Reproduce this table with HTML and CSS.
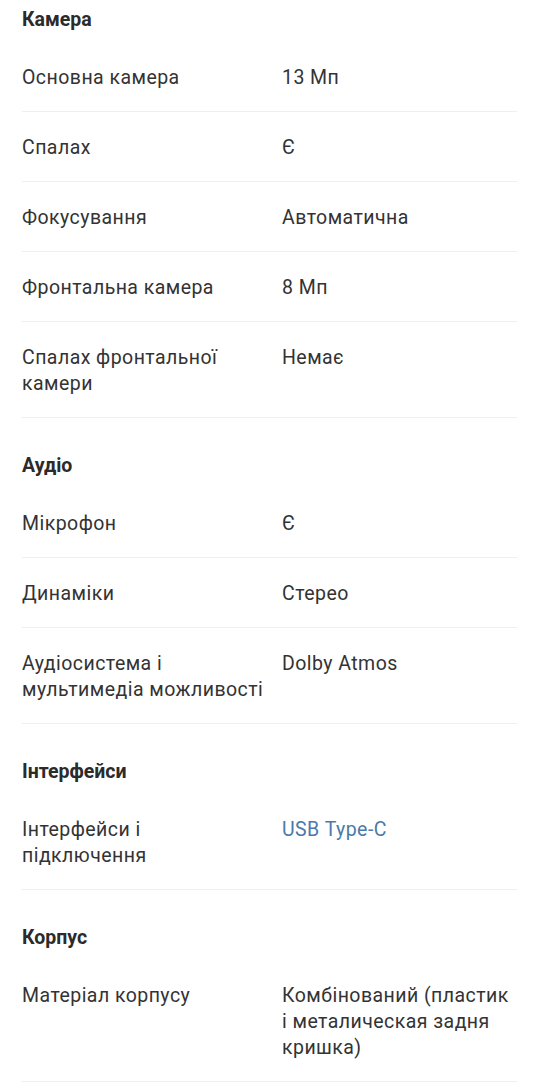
FILE: index.html
```html
<!DOCTYPE html>
<html lang="uk">
<head>
<meta charset="utf-8">
<title>Характеристики</title>
<link rel="stylesheet" href="styles.css">
</head>
<body>
<div class="specs">
  <section class="group">
    <h2 class="group-title">Камера</h2>
    <div class="row"><div class="label">Основна камера</div><div class="value">13 Мп</div></div>
    <div class="row"><div class="label">Спалах</div><div class="value">Є</div></div>
    <div class="row"><div class="label">Фокусування</div><div class="value">Автоматична</div></div>
    <div class="row"><div class="label">Фронтальна камера</div><div class="value">8 Мп</div></div>
    <div class="row"><div class="label">Спалах фронтальної камери</div><div class="value">Немає</div></div>
  </section>
  <section class="group">
    <h2 class="group-title">Аудіо</h2>
    <div class="row"><div class="label">Мікрофон</div><div class="value">Є</div></div>
    <div class="row"><div class="label">Динаміки</div><div class="value">Стерео</div></div>
    <div class="row"><div class="label">Аудіосистема і мультимедіа можливості</div><div class="value">Dolby Atmos</div></div>
  </section>
  <section class="group">
    <h2 class="group-title">Інтерфейси</h2>
    <div class="row"><div class="label">Інтерфейси і підключення</div><div class="value"><a class="link" href="#">USB Type-C</a></div></div>
  </section>
  <section class="group">
    <h2 class="group-title">Корпус</h2>
    <div class="row"><div class="label">Матеріал корпусу</div><div class="value">Комбінований (пластик і металическая задня кришка)</div></div>
  </section>
</div>
</body>
</html>
```
FILE: styles.css
```css
html, body {
  margin: 0;
  padding: 0;
  background: #ffffff;
}
body {
  font-family: Roboto, "Noto Sans", sans-serif;
  color: #333333;
  font-size: 19.5px;
  line-height: 26px;
  overflow: hidden;
}
.specs {
  margin-top: -28px;
  padding: 0 23px 0 22px;
}
.group-title {
  margin: 0;
  padding: 35px 0 9px;
  font-size: 19.5px;
  line-height: 26px;
  font-weight: 700;
  color: #2b2b2b;
}
.row {
  display: grid;
  grid-template-columns: 260px 1fr;
  padding: 23px 0 20px;
  border-bottom: 1px solid #efefef;
  letter-spacing: 0.45px;
}
.label {
  padding-right: 16px;
}
.link {
  color: #4a7aab;
  text-decoration: none;
}
```
